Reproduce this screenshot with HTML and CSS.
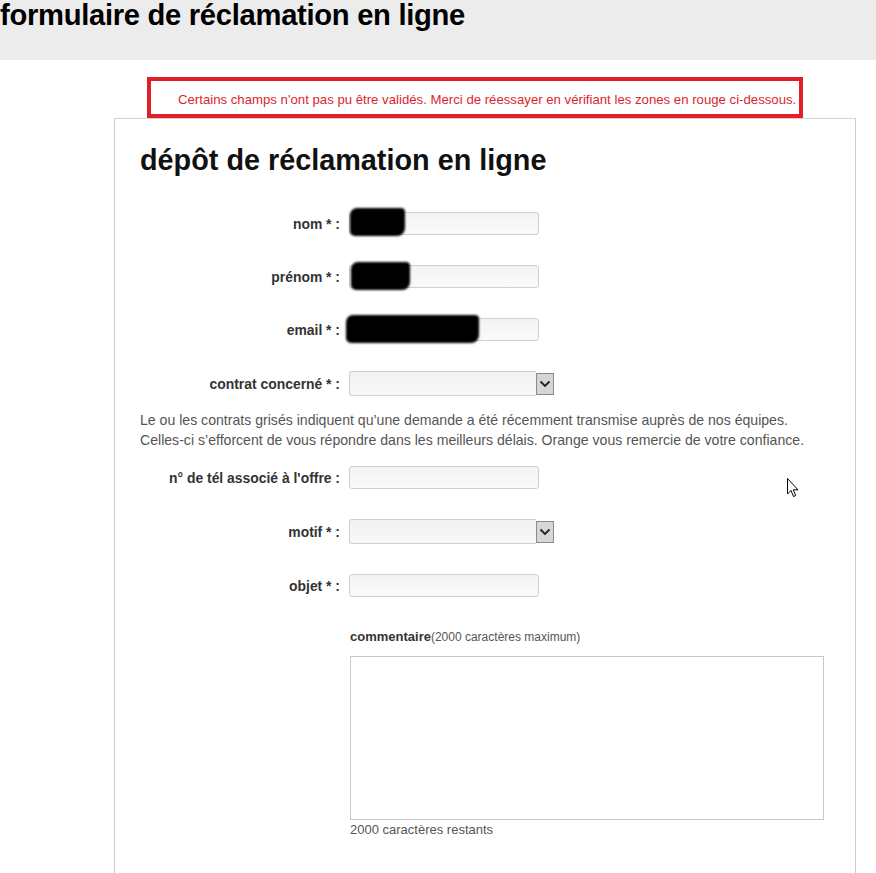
FILE: index.html
```html
<!DOCTYPE html>
<html lang="fr">
<head>
<meta charset="utf-8">
<title>formulaire de réclamation en ligne</title>
<link rel="stylesheet" href="styles.css">
</head>
<body>
<header class="topbar">
  <h1 class="page-title">formulaire de réclamation en ligne</h1>
</header>
<div class="error-box">Certains champs n'ont pas pu être validés. Merci de réessayer en vérifiant les zones en rouge ci-dessous.</div>
<main class="card">
  <h2 class="card-title">dépôt de réclamation en ligne</h2>
  <div class="row">
    <label class="lbl">nom * :</label>
    <div class="field"><div class="input"></div><span class="blot blot-nom"></span></div>
  </div>
  <div class="row">
    <label class="lbl">prénom * :</label>
    <div class="field"><div class="input"></div><span class="blot blot-prenom"></span></div>
  </div>
  <div class="row">
    <label class="lbl">email * :</label>
    <div class="field"><div class="input"></div><span class="blot blot-email"></span></div>
  </div>
  <div class="row">
    <label class="lbl">contrat concerné * :</label>
    <div class="select"><div class="select-box"></div><span class="select-btn"><svg width="12" height="8" viewBox="0 0 12 8"><path d="M1.5 1.5 L6 6 L10.5 1.5" fill="none" stroke="#222" stroke-width="1.8"/></svg></span></div>
  </div>
  <p class="note">Le ou les contrats grisés indiquent qu’une demande a été récemment transmise auprès de nos équipes.<br>Celles-ci s’efforcent de vous répondre dans les meilleurs délais. Orange vous remercie de votre confiance.</p>
  <div class="row">
    <label class="lbl">n° de tél associé à l'offre :</label>
    <div class="field"><div class="input"></div></div>
  </div>
  <div class="row">
    <label class="lbl">motif * :</label>
    <div class="select"><div class="select-box"></div><span class="select-btn"><svg width="12" height="8" viewBox="0 0 12 8"><path d="M1.5 1.5 L6 6 L10.5 1.5" fill="none" stroke="#222" stroke-width="1.8"/></svg></span></div>
  </div>
  <div class="row">
    <label class="lbl">objet * :</label>
    <div class="field"><div class="input"></div></div>
  </div>
  <div class="comment">
    <div class="comment-lbl"><b>commentaire</b><span>(2000 caractères maximum)</span></div>
    <div class="textarea"></div>
    <div class="remaining">2000 caractères restants</div>
  </div>
</main>
<svg class="cursor" width="13" height="21" viewBox="0 0 13 21"><path d="M0.5 0.5 L0.5 16 L4 12.5 L6.5 18.5 L8.7 17.6 L6.3 11.8 L11 11.8 Z" fill="#fff" stroke="#000" stroke-width="1"/></svg>
</body>
</html>
```
FILE: styles.css
```css
* { box-sizing: border-box; }
body {
  margin: 0;
  font-family: "Liberation Sans", Arial, sans-serif;
  color: #333;
  background: #fff;
  position: relative;
  height: 873px;
  overflow: hidden;
}
.topbar {
  background: #ececec;
  height: 60px;
}
.page-title {
  margin: 0;
  font-size: 29.2px;
  line-height: 30px;
  font-weight: bold;
  color: #000;
  letter-spacing: -0.3px;
}
.error-box {
  margin: 17px 0 0 147px;
  width: 656px;
  height: 41px;
  border: 4px solid #e31e26;
  color: #d9252c;
  font-size: 13.2px;
  padding: 11px 0 0 27px;
  line-height: 15px;
  white-space: nowrap;
}
.card {
  margin: 0 0 0 114px;
  width: 742px;
  min-height: 760px;
  border: 1px solid #ccc;
  border-top-color: #d4d4d4;
  padding: 25px 0 0 25px;
}
.card-title {
  margin: 0 0 36px;
  font-size: 28.8px;
  line-height: 32px;
  font-weight: bold;
  color: #111;
}
.row {
  display: flex;
  align-items: center;
  margin-bottom: 30px;
}
.lbl {
  width: 200px;
  text-align: right;
  font-size: 13.9px;
  font-weight: bold;
  color: #333;
  margin-right: 9px;
}
.field { position: relative; }
.input {
  width: 190px;
  height: 23px;
  border: 1px solid #d0d0d0;
  border-radius: 3px;
  background: linear-gradient(#f3f3f3, #fafafa);
}
.blot {
  position: absolute;
  background: #000;
  border-radius: 7px 4px 8px 5px;
  filter: blur(1.3px);
}
.blot-nom { left: 1px; top: -4px; width: 55px; height: 28px; }
.blot-prenom { left: 2px; top: -3px; width: 59px; height: 28px; }
.blot-email { left: -3px; top: -3px; width: 133px; height: 28px; }
.select {
  display: flex;
  align-items: stretch;
  height: 25px;
}
.select-box {
  width: 187px;
  border: 1px solid #cfcfcf;
  border-right: none;
  border-radius: 3px 0 0 3px;
  background: linear-gradient(#f2f2f2, #f8f8f8);
}
.select-btn {
  width: 18px;
  margin: 2px 0 1px;
  background: #d8d6d2;
  border: 1px solid #8a8a8a;
  display: flex;
  align-items: center;
  justify-content: center;
}
.note {
  margin: -15px 0 16px;
  font-size: 14.1px;
  line-height: 19.5px;
  color: #555;
}
.comment {
  margin-left: 210px;
  margin-top: 33px;
}
.comment-lbl {
  font-size: 13px;
  color: #444;
  line-height: 14px;
}
.comment-lbl b { font-size: 13px; color: #333; }
.comment-lbl span { font-size: 12px; color: #555; }
.textarea {
  margin-top: 12px;
  width: 474px;
  height: 164px;
  border: 1px solid #c8c8c8;
}
.remaining {
  margin-top: 2px;
  font-size: 13px;
  color: #555;
}
.cursor {
  position: absolute;
  left: 787px;
  top: 478px;
}
```
